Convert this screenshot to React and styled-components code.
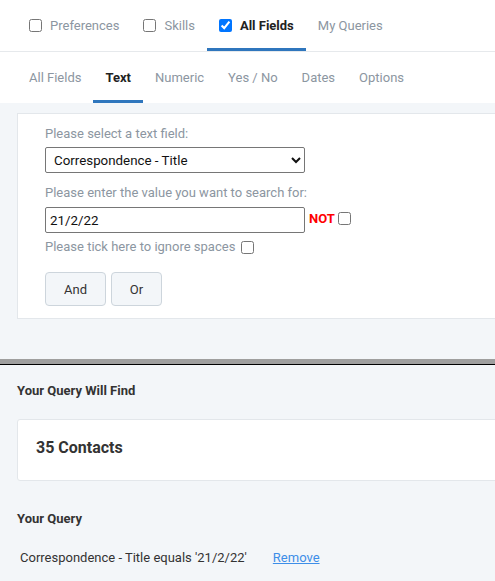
import React, { useState } from 'react';
import styled, { createGlobalStyle } from 'styled-components';

const GlobalStyle = createGlobalStyle`
  html, body {
    margin: 0;
    padding: 0;
    background: #f3f6f9;
    font-family: Roboto, "Liberation Sans", Arial, sans-serif;
    overflow: hidden;
  }
`;

const Page = styled.div`
  width: 495px;
  min-height: 581px;
  background: #f3f6f9;
`;

const TopBar = styled.div`
  display: flex;
  height: 51px;
  padding-left: 17px;
  background: #fff;
  border-bottom: 1px solid #e6e9ec;
`;

const TopTab = styled.label`
  display: flex;
  align-items: center;
  gap: 8px;
  padding: 0 12px;
  font-size: 13px;
  color: ${(p) => (p.$active ? '#222' : '#8c96a1')};
  font-weight: ${(p) => (p.$active ? 700 : 400)};
  border-bottom: 3px solid ${(p) => (p.$active ? '#2f76bd' : 'transparent')};
  border-top: 3px solid transparent;
  cursor: pointer;
`;

const TabCheck = styled.input.attrs({ type: 'checkbox' })`
  width: 13px;
  height: 13px;
  margin: 0;
  accent-color: #0075ff;
`;

const SubBar = styled.div`
  display: flex;
  height: 51px;
  padding-left: 17px;
  background: #fff;
`;

const SubTab = styled.div`
  display: flex;
  align-items: center;
  padding: 0 12px;
  font-size: 13px;
  color: ${(p) => (p.$active ? '#222' : '#8c96a1')};
  font-weight: ${(p) => (p.$active ? 700 : 400)};
  border-bottom: 3px solid ${(p) => (p.$active ? '#2f76bd' : 'transparent')};
  border-top: 3px solid transparent;
`;

const Panel = styled.div`
  margin: 10px -20px 0 17px;
  padding: 12px 27px 12px 27px;
  background: #fff;
  border: 1px solid #e3e7eb;
  border-right: none;
`;

const FieldLabel = styled.div`
  font-size: 13px;
  color: #8c96a1;
  line-height: 16px;
  margin: ${(p) => p.$margin || '0 0 5px'};
  display: flex;
  align-items: center;
  gap: 6px;
`;

const Select = styled.select`
  display: block;
  width: 260px;
  height: 26px;
  padding: 0 4px;
  font-family: Roboto, "Liberation Sans", Arial, sans-serif;
  font-size: 13.33px;
  color: #111;
  background: #fff;
  border: 1px solid #767676;
  border-radius: 2px;
`;

const InputRow = styled.div`
  display: flex;
  align-items: center;
  gap: 4px;
`;

const TextInput = styled.input`
  box-sizing: border-box;
  width: 260px;
  height: 26px;
  padding: 0 4px;
  font-family: Roboto, "Liberation Sans", Arial, sans-serif;
  font-size: 13.33px;
  color: #111;
  border: 1px solid #767676;
  border-radius: 2px;
  margin: 0;
`;

const NotLabel = styled.span`
  color: #f00;
  font-weight: 700;
  font-size: 13px;
  display: flex;
  align-items: center;
  gap: 3px;
  margin-top: -4px;
`;

const SmallCheck = styled.input.attrs({ type: 'checkbox' })`
  width: 13px;
  height: 13px;
  margin: 0;
`;

const ButtonRow = styled.div`
  display: flex;
  gap: 5px;
  margin-top: 17px;
`;

const LogicButton = styled.button`
  width: ${(p) => p.$width}px;
  height: 34px;
  padding: 0;
  font-family: Roboto, "Liberation Sans", Arial, sans-serif;
  font-size: 13px;
  color: #333;
  background: #f3f6f9;
  border: 1px solid #cdd5dc;
  border-radius: 4px;
`;

const Divider = styled.div`
  margin-top: 40px;
  height: 5px;
  background: #9f9f9f;
  border-bottom: 1px solid #000;
`;

const Results = styled.div`
  padding: 0 0 0 17px;
`;

const SectionTitle = styled.div`
  font-size: 13px;
  font-weight: 700;
  color: #333;
  margin-top: ${(p) => p.$top}px;
  line-height: 16px;
`;

const CountCard = styled.div`
  box-sizing: border-box;
  margin: 20px -20px 0 0;
  height: 62px;
  display: flex;
  align-items: center;
  padding: 0 0 6px 18px;
  background: #fff;
  border: 1px solid #e3e7eb;
  border-radius: 3px;
  font-size: 16px;
  font-weight: 700;
  color: #333;
`;

const QueryLine = styled.div`
  display: flex;
  gap: 26px;
  margin-top: 23px;
  padding-left: 3px;
  font-size: 13px;
  color: #333;
`;

const RemoveLink = styled.a`
  color: #3d8ee8;
  text-decoration: underline;
  cursor: pointer;
`;

const topTabs = ['Preferences', 'Skills', 'All Fields', 'My Queries'];
const subTabs = ['All Fields', 'Text', 'Numeric', 'Yes / No', 'Dates', 'Options'];

export default function App() {
  const [value, setValue] = useState('21/2/22');

  return (
    <Page>
      <GlobalStyle />
      <TopBar>
        {topTabs.map((t) => (
          <TopTab key={t} $active={t === 'All Fields'}>
            {t !== 'My Queries' && <TabCheck defaultChecked={t === 'All Fields'} />}
            {t}
          </TopTab>
        ))}
      </TopBar>
      <SubBar>
        {subTabs.map((t) => (
          <SubTab key={t} $active={t === 'Text'}>
            {t}
          </SubTab>
        ))}
      </SubBar>
      <Panel>
        <FieldLabel>Please select a text field:</FieldLabel>
        <Select defaultValue="title">
          <option value="title">Correspondence - Title</option>
        </Select>
        <FieldLabel $margin="12px 0 6px">Please enter the value you want to search for:</FieldLabel>
        <InputRow>
          <TextInput value={value} onChange={(e) => setValue(e.target.value)} />
          <NotLabel>
            NOT <SmallCheck />
          </NotLabel>
        </InputRow>
        <FieldLabel $margin="6px 0 0">
          Please tick here to ignore spaces <SmallCheck />
        </FieldLabel>
        <ButtonRow>
          <LogicButton $width={61}>And</LogicButton>
          <LogicButton $width={51}>Or</LogicButton>
        </ButtonRow>
      </Panel>
      <Divider />
      <Results>
        <SectionTitle $top={18}>Your Query Will Find</SectionTitle>
        <CountCard>35 Contacts</CountCard>
        <SectionTitle $top={30}>Your Query</SectionTitle>
        <QueryLine>
          <span>Correspondence - Title equals '21/2/22'</span>
          <RemoveLink>Remove</RemoveLink>
        </QueryLine>
      </Results>
    </Page>
  );
}
